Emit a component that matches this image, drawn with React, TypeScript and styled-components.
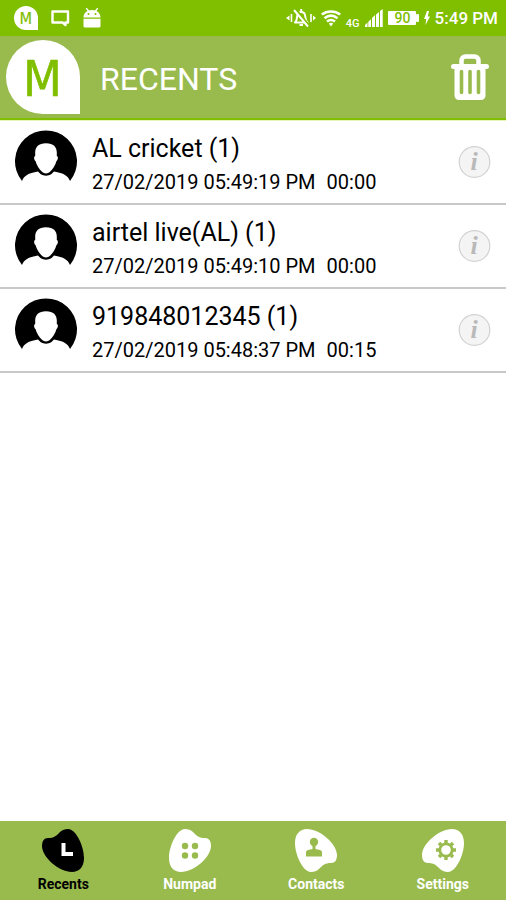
import React from "react";
import styled, { createGlobalStyle } from "styled-components";

const LIME = "#80be00";
const OLIVE = "#99bb4d";

const GlobalStyle = createGlobalStyle`
  * { box-sizing: border-box; }
  body { margin: 0; background: #fff; font-family: Roboto, "Noto Sans", sans-serif; color: #000; }
  button { font: inherit; color: inherit; background: none; border: 0; padding: 0; cursor: pointer; }
  svg { display: block; flex: none; }
`;

const Screen = styled.div`
  display: flex;
  flex-direction: column;
  min-height: 100vh;
`;

const StatusBar = styled.div`
  display: flex;
  justify-content: space-between;
  align-items: center;
  height: 36px;
  padding: 0 8px 0 14px;
  background: ${LIME};
  color: #fff;
`;

const StatusGroup = styled.div<{ $gap: number }>`
  display: flex;
  align-items: center;
  gap: ${(p) => p.$gap}px;
`;

const Network = styled.span`
  align-self: flex-end;
  font-size: 11px;
  line-height: 12px;
  font-weight: 500;
`;

const Clock = styled.time`
  font-size: 17px;
  line-height: 24px;
  font-weight: 500;
`;

const Header = styled.header`
  display: flex;
  align-items: center;
  height: 84px;
  padding: 0 16px 0 6px;
  background: ${OLIVE};
  border-bottom: 2px solid ${LIME};
`;

const Title = styled.h1`
  flex: 1;
  margin: 4px 0 0 20px;
  font-size: 32px;
  line-height: 40px;
  font-weight: 400;
  color: #fff;
`;

const CallList = styled.ul`
  flex: 1;
  list-style: none;
  margin: 0;
  padding: 0;
  border-top: 1px solid #e6f5b8;
`;

const CallRow = styled.li`
  display: flex;
  align-items: center;
  height: 84px;
  padding: 0 15px 0 14px;
  border-bottom: 2px solid #c8c8c8;
`;

const AvatarBox = styled.div`
  align-self: flex-start;
  padding-top: 9px;
`;

const CallText = styled.div`
  flex: 1;
  min-width: 0;
  margin-left: 14px;
  padding-top: 6px;
`;

const CallName = styled.div`
  font-size: 25px;
  line-height: 34px;
`;

const CallMeta = styled.div`
  display: flex;
  gap: 11px;
  font-size: 20px;
  line-height: 32px;
`;

const NavBar = styled.nav`
  display: grid;
  grid-template-columns: repeat(4, 1fr);
  height: 79px;
  background: ${OLIVE};
`;

const NavButton = styled.button<{ $active: boolean }>`
  && { color: ${(p) => (p.$active ? "#000" : "#fff")}; }
  display: flex;
  flex-direction: column;
  align-items: center;
  padding-top: 7px;
`;

const NavLabel = styled.span`
  font-size: 14px;
  line-height: 22px;
  font-weight: 700;
`;

function Logo({ size }: { size: number }) {
  return (
    <svg width={size} height={size} viewBox="0 0 74 74" role="img" aria-label="M logo">
      <path d="M37 0A37 37 0 0 1 74 37V74H37A37 37 0 0 1 37 0Z" fill="#fff" />
      <text
        x="36.500"
        y="56"
        textAnchor="middle"
        fontFamily="DejaVu Sans Condensed, DejaVu Sans"
        fontWeight="400"
        fontSize="50"
        fill={LIME}
        stroke={LIME}
        strokeWidth="0.600"
        strokeLinejoin="round"
      >
        M
      </text>
    </svg>
  );
}

function ChatIcon() {
  return (
    <svg width="19" height="18" viewBox="0 0 19 18" fill="none" stroke="#fff" strokeWidth="2.400" strokeLinejoin="round">
      <path d="M1.500 2.500h15.500v11H14.500v2.500l-3-2.500H1.500Z" />
    </svg>
  );
}

function AndroidIcon() {
  return (
    <svg width="18" height="20" viewBox="0 0 18 20">
      <path d="M3.500.5 5.500 3M14.500.5 12.500 3" stroke="#fff" strokeWidth="1.300" strokeLinecap="round" />
      <path d="M.5 9.500C.5 5 4 2 9 2s8.500 3 8.500 7.500ZM.5 10.800h17V18a1.500 1.500 0 0 1-1.500 1.500H2A1.500 1.500 0 0 1 .5 18Z" fill="#fff" />
      <circle cx="5.500" cy="6" r="1" fill={LIME} />
      <circle cx="12.500" cy="6" r="1" fill={LIME} />
    </svg>
  );
}

function BellOffIcon() {
  return (
    <svg width="30" height="20" viewBox="0 0 30 20" fill="none" stroke="#fff">
      <path d="M9 14.500c2-2 2-4 2.200-6.500.3-2.500 1.800-4 4-4s3.700 1.500 4 4c.2 2.500.3 4.500 2.300 6.500Z" strokeWidth="2" strokeLinejoin="round" />
      <path d="M13.500 17h3.500" strokeWidth="2" />
      <path d="M15.200 1v2" strokeWidth="2" />
      <path d="M9.500 1.500 23 18" stroke={LIME} strokeWidth="3" />
      <path d="M8 2 22 18.500" strokeWidth="2" />
      <path d="M5.500 6v8M25 6v8" strokeWidth="1.600" />
      <path d="M3.500 7.500v5L0 10ZM27 7.500v5L30 10Z" fill="#fff" stroke="none" />
    </svg>
  );
}

function WifiIcon() {
  return (
    <svg width="20" height="17" viewBox="0 0 20 17" fill="none" stroke="#fff" strokeWidth="2.600">
      <path d="M.8 4.500C6 .4 14 .4 19.200 4.500" />
      <path d="M3.500 8.200C7.500 5 12.500 5 16.500 8.200" />
      <path d="M6 11.600c2.500-2 5.500-2 8 0" />
      <path d="M7.800 13.400c1.400-.9 3-.9 4.400 0L10 16.500Z" fill="#fff" stroke="none" />
    </svg>
  );
}

function SignalIcon() {
  return (
    <svg width="18" height="18" viewBox="0 0 18 18" fill="#fff">
      <path d="M0 18v-2l2.500-2.500V18ZM3.300 18v-5.300l2.700-2.500V18ZM7 18V9l3-3v12ZM11 18V5.500l3-2.500v15ZM15 18V2l2.700-2v18Z" />
    </svg>
  );
}

function BatteryIcon() {
  return (
    <svg width="31" height="14" viewBox="0 0 31 14" role="img" aria-label="Battery 90 percent">
      <rect width="28" height="14" rx="1" fill="#fff" />
      <rect x="28" y="3" width="3" height="8" rx="1" fill="#fff" />
      <text x="14.500" y="12" textAnchor="middle" fontFamily="Roboto" fontSize="14" fontWeight="500" fill={LIME}>
        90
      </text>
    </svg>
  );
}

function BoltIcon() {
  return (
    <svg width="6" height="14" viewBox="0 0 6 14" fill="#fff">
      <path d="M3 0 0 8h2.200L1.500 14 6 5.500H3.800L5 0Z" />
    </svg>
  );
}

function TrashIcon() {
  return (
    <svg width="40" height="46" viewBox="0 0 40 46">
      <path d="M11.500 12V6.500a4 4 0 0 1 4-4h9a4 4 0 0 1 4 4V12" fill="none" stroke="#fff" strokeWidth="4.500" />
      <rect x="1" y="10" width="38" height="5" rx="2.500" fill="#fff" />
      <path d="M4.500 13h31v28.500a4.500 4.500 0 0 1-4.500 4.500H9a4.500 4.500 0 0 1-4.500-4.500Z" fill="#fff" />
      <path d="M11.500 17.500v21M20 17.500v21M28.500 17.500v21" stroke={OLIVE} strokeWidth="3.600" strokeLinecap="round" />
    </svg>
  );
}

function Avatar() {
  return (
    <svg width="64" height="52" viewBox="0 0 64 52">
      <path
        d="M8 51A31 31 0 1 1 56 51C54 46 50 43 40 41.500L37.500 44C34 46.300 30 46.300 26.500 44L24 41.500C14 43 10 46 8 51Z"
        fill="#000"
      />
      <path
        d="M32 13.200C39.500 13.200 42.800 17 42.800 22.500V26C44.300 26 44.200 30 42.500 31C41.300 35.500 38.500 39.500 36 41.800C33.500 44 30.500 44 28 41.800C25.500 39.500 22.700 35.500 21.500 31C19.800 30 19.700 26 21.200 26V22.500C21.200 17 24.500 13.200 32 13.200Z"
        fill="#fff"
      />
    </svg>
  );
}

function InfoIcon() {
  return (
    <svg width="33" height="33" viewBox="0 0 33 33">
      <circle cx="16.500" cy="16" r="15.300" fill="#f4f4f4" stroke="#d2d2d2" strokeWidth="1.200" />
      <text
        x="16"
        y="24"
        textAnchor="middle"
        fontFamily="Liberation Serif"
        fontSize="26"
        fontStyle="italic"
        fontWeight="700"
        fill="#b9b9b9"
      >
        i
      </text>
    </svg>
  );
}

const BLOB =
  "M27 1C35 1 43 18 43 30C43 39 38 44 31 44C18 44 1 29 1 18C1 13 3 10 7 10C13 10 15 8 19 4C21 2 24 1 27 1Z";

interface BlobProps {
  flipX?: boolean;
  flipY?: boolean;
  children: React.ReactNode;
}

function BlobIcon({ flipX, flipY, children }: BlobProps) {
  const matrix = `matrix(${flipX ? -1 : 1} 0 0 ${flipY ? -1 : 1} ${flipX ? 44 : 0} ${flipY ? 45 : 0})`;
  return (
    <svg width="44" height="45" viewBox="0 0 44 45">
      <path d={BLOB} transform={matrix} fill="currentColor" />
      {children}
    </svg>
  );
}

const calls = [
  { name: "AL cricket (1)", date: "27/02/2019 05:49:19 PM", duration: "00:00" },
  { name: "airtel live(AL) (1)", date: "27/02/2019 05:49:10 PM", duration: "00:00" },
  { name: "919848012345 (1)", date: "27/02/2019 05:48:37 PM", duration: "00:15" },
];

const tabs = [
  {
    label: "Recents",
    icon: (
      <BlobIcon>
        <path d="M22.500 15v11H32" fill="none" stroke="#fff" strokeWidth="4" />
      </BlobIcon>
    ),
  },
  {
    label: "Numpad",
    icon: (
      <BlobIcon flipX>
        <g fill={OLIVE}>
          <circle cx="17" cy="18" r="3.200" />
          <circle cx="27" cy="18" r="3.200" />
          <circle cx="17" cy="27.500" r="3.200" />
          <circle cx="27" cy="27.500" r="3.200" />
        </g>
      </BlobIcon>
    ),
  },
  {
    label: "Contacts",
    icon: (
      <BlobIcon flipX flipY>
        <g fill={OLIVE}>
          <circle cx="20" cy="14" r="4.200" />
          <path d="M18.500 17h3v4l4.500 1c1.500.4 2 1.300 2 2.500V28.500H12V24.500c0-1.200.5-2.100 2-2.500l4.500-1Z" />
        </g>
      </BlobIcon>
    ),
  },
  {
    label: "Settings",
    icon: (
      <BlobIcon flipY>
        <g fill="none" stroke={OLIVE} transform="translate(25 22)">
          <circle r="6.200" strokeWidth="2.800" />
          <path
            d="M0-7V-10M0 7V10M-7 0H-10M7 0H10M5-5 7-7M-5-5-7-7M5 5 7 7M-5 5-7 7"
            strokeWidth="3.400"
          />
        </g>
      </BlobIcon>
    ),
  },
];

export default function App() {
  return (
    <Screen>
      <GlobalStyle />
      <StatusBar>
        <StatusGroup $gap={13}>
          <Logo size={24} />
          <ChatIcon />
          <AndroidIcon />
        </StatusGroup>
        <StatusGroup $gap={5}>
          <BellOffIcon />
          <WifiIcon />
          <Network>4G</Network>
          <SignalIcon />
          <BatteryIcon />
          <BoltIcon />
          <Clock>5:49 PM</Clock>
        </StatusGroup>
      </StatusBar>
      <Header>
        <Logo size={74} />
        <Title>RECENTS</Title>
        <button type="button" aria-label="Delete all">
          <TrashIcon />
        </button>
      </Header>
      <CallList>
        {calls.map((call) => (
          <CallRow key={call.name}>
            <AvatarBox>
              <Avatar />
            </AvatarBox>
            <CallText>
              <CallName>{call.name}</CallName>
              <CallMeta>
                <span>{call.date}</span>
                <span>{call.duration}</span>
              </CallMeta>
            </CallText>
            <button type="button" aria-label={`Details for ${call.name}`}>
              <InfoIcon />
            </button>
          </CallRow>
        ))}
      </CallList>
      <NavBar>
        {tabs.map((tab, index) => (
          <NavButton key={tab.label} type="button" $active={index === 0}>
            {tab.icon}
            <NavLabel>{tab.label}</NavLabel>
          </NavButton>
        ))}
      </NavBar>
    </Screen>
  );
}
